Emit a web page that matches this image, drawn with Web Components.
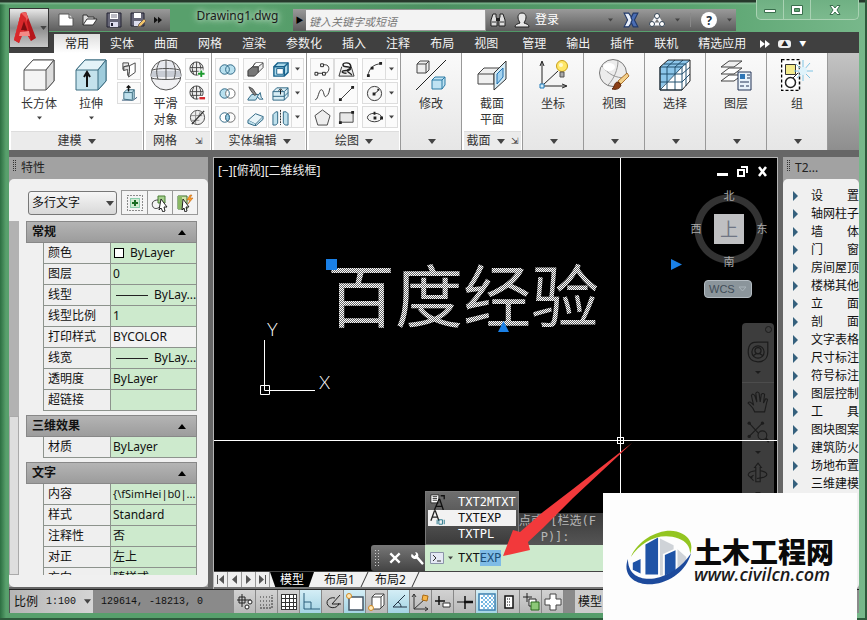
<!DOCTYPE html>
<html lang="zh-CN">
<head>
<meta charset="utf-8">
<title>Drawing1.dwg</title>
<style>
    html, body { margin: 0; height: 100%; }
    body { font: 12px/18px "Noto Sans", "Noto Sans CJK SC", sans-serif; color: #222; overflow: hidden; }
</style>
</head>
<body>
<cad-app></cad-app>

<script>
// 图标: [viewBox, 内容]
var ICONS = {
    app: ['0 0 24 32', '<path d="M8 1l5-1 10 26-5 3-3-5H8l-2 7-5-3z" fill="#b5161b"/><path d="M8 1l5-1 2 6-8 20-6 2z" fill="#f0605f"/><path d="M8 1l5 5 5 23-3-5-2-10-4 10-3 7-5-3z" fill="#d8282b"/><path d="M11 9l3 9H8z" fill="#7c0d10"/><path d="M7 20l9-1 1 5H6z" fill="#f58a86"/>'],
    down: ['0 0 8 5', '<path d="M0 0h8L4 5z" fill="#444"/>'],
    more: ['0 0 10 8', '<path d="M0 0l5 4-5 4zM5 0l5 4-5 4z" fill="currentColor"/>'],
    newf: ['0 0 16 14', '<path d="M1 1h10l4 4v8H1z" fill="#fff" stroke="#555"/><path d="M11 1v4h4" fill="#ddd" stroke="#555"/>'],
    open: ['0 0 16 14', '<path d="M1 12V2h4l1 2h6v3" fill="#ddd" stroke="#333"/><path d="M1 12l4-6h10l-4 6z" fill="#fff" stroke="#333"/>'],
    save: ['0 0 16 16', '<path d="M1 1h14v14H1z" fill="#667" stroke="#223"/><path d="M4 1h8v6H4z" fill="#fff"/><path d="M5 3h6M5 5h6" stroke="#778"/><path d="M4 10h8v5H4z" fill="#dde"/><path d="M5 11h2v3H5z" fill="#223"/>'],
    saveas: ['0 0 16 16', '<path d="M1 1h13v13H1z" fill="#667" stroke="#223"/><path d="M4 1h7v5H4z" fill="#fff"/><path d="M4 9h7v5H4z" fill="#dde"/><path d="M8 15l1-3 5-5 2 2-5 5z" fill="#f2c46a" stroke="#765"/>'],
    binoc: ['0 0 16 16', '<path d="M3 2h3v3l1 2v7H1V8zM13 2h-3v3L9 7v7h6V8z" fill="#ddd" stroke="#222"/><path d="M6 6h4v3H6z" fill="#222"/><path d="M2 10h4M10 10h4" stroke="#333"/>'],
    user: ['0 0 16 16', '<path d="M1 15c0-3 3-3 5-4l-1-2c-2-4-1-8 3-8s5 4 3 8l-1 2c2 1 5 1 5 4z" fill="#e8e8e8" stroke="#222"/>'],
    exchange: ['0 0 14 14', '<path d="M1 1h4l4 6-4 6H1l3-6z" fill="#e8eef8" stroke="#223a6b"/><path d="M13 1H9L7 5l1 2-1 2 2 4h4l-3-6z" fill="#4a6db5" stroke="#223a6b"/>'],
    a360: ['0 0 16 14', '<path d="M8 3L3 11h10z" fill="none" stroke="#f4f6fa" stroke-width="3"/><circle cx="8" cy="3" r="2.500" fill="#fff" stroke="#345"/><circle cx="3" cy="11" r="2.500" fill="#fff" stroke="#345"/><circle cx="13" cy="11" r="2.500" fill="#fff" stroke="#345"/>'],
    min: ['0 0 12 10', '<path d="M.5 4.500h11v3H.5z" fill="#fff" stroke="#3a6f4d"/>'],
    max: ['0 0 12 10', '<path d="M.5.5h11v9H.5z" fill="#fff" stroke="#3a6f4d"/><path d="M3.500 3.500h5v3h-5z" fill="#5fa673" stroke="#3a6f4d"/>'],
    close: ['0 0 12 10', '<path d="M1 .5h3l2 2.500L8 .5h3L8 5l3 4.500H8L6 7 4 9.500H1L4 5z" fill="#fff" stroke="#3a6f4d"/>'],
    box: ['0 0 32 32', '<path d="M1 11l9-10h21v21l-8 9H1z" fill="#f4f4f4" stroke="#555"/><path d="M1 11l9-10h21l-8 10z" fill="#fff" stroke="#555"/><path d="M23 11l8-10v21l-8 9z" fill="#ddd" stroke="#555"/>'],
    extrude: ['0 0 32 32', '<path d="M1 11l9-10h21v21l-8 9H1z" fill="#c4e2ec" stroke="#3b6c80"/><path d="M1 11l9-10h21l-8 10z" fill="#e4f3f8" stroke="#3b6c80"/><path d="M23 11l8-10v21l-8 9z" fill="#9fccdc" stroke="#3b6c80"/><path d="M12 28V14M9 18l3-5 3 5" fill="none" stroke="#111" stroke-width="2"/>'],
    polysolid: ['0 0 18 18', '<path d="M2 2h6v3L3 6v4l-1-1z" fill="#e8e8e8" stroke="#444"/><path d="M3 6l6-1v6l-1 5-1-1V9L3 10z" fill="#ddd" stroke="#444"/><path d="M9 5l6-3v10l-7 5 1-6z" fill="#fff" stroke="#444"/>'],
    presspull: ['0 0 18 18', '<path d="M1 16h12l4-3" fill="none" stroke="#357" /><path d="M3 15V8l3-3h8v9l-2 2z" fill="#bfe0ec" stroke="#3b6c80"/><path d="M12 8v7M3 8h9l2-3" fill="none" stroke="#3b6c80"/><path d="M8 7V1M6 3l2-2 2 2" fill="none" stroke="#111" stroke-width="1.500"/>'],
    sphere: ['0 0 32 32', '<circle cx="16" cy="16" r="15" fill="#f2f2f4" stroke="#555"/><path d="M2 12h28l1 6H1z" fill="#c8ccd4"/><path d="M9 3h14l2 9H7z" fill="#e6e8ee"/><path d="M2 11c8-2 20-2 28 0M1 19c8 2 22 2 30 0M10 2c-4 6-4 12-2 18M22 2c4 6 4 12 2 18M16 1v19" fill="none" stroke="#555"/>'],
    meshadd: ['0 0 18 18', '<circle cx="8" cy="8" r="7" fill="#eee" stroke="#444"/><path d="M1 7h14M2 11h12M5 2c-2 4-2 8 0 12M11 2c2 4 2 8 0 12M8 1v14" fill="none" stroke="#444"/><path d="M13 9v8M9 13h8" stroke="#fff" stroke-width="4"/><path d="M13 10v7M9.500 13.500h7" stroke="#1d9a2f" stroke-width="2"/>'],
    meshsub: ['0 0 18 18', '<circle cx="8" cy="8" r="7" fill="#eee" stroke="#444"/><path d="M1 7h14M2 11h12M5 2c-2 4-2 8 0 12M11 2c2 4 2 8 0 12M8 1v14" fill="none" stroke="#444"/><path d="M10 14h7" stroke="#fff" stroke-width="5"/><path d="M11 14h6" stroke="#d3262a" stroke-width="2.500"/>'],
    meshoff: ['0 0 18 18', '<circle cx="9" cy="9" r="7.500" fill="#eee" stroke="#444"/><path d="M2 7h12M3 12h8M7 2v14M12 3l-2 5" stroke="#888"/><path d="M3 16L16 2" stroke="#333" stroke-width="1.500"/>'],
    union: ['0 0 18 12', '<circle cx="6" cy="6" r="5" fill="#b8e0ef"/><circle cx="12" cy="6" r="5" fill="#b8e0ef"/><circle cx="6" cy="6" r="5" fill="none" stroke="#2b6482"/><circle cx="12" cy="6" r="5" fill="none" stroke="#2b6482"/>'],
    subtract: ['0 0 18 12', '<circle cx="6" cy="6" r="5" fill="#b8e0ef" stroke="#2b6482"/><circle cx="12" cy="6" r="5" fill="#fff" stroke="#666"/><path d="M9 2a5 5 0 010 8" fill="none" stroke="#2b6482"/>'],
    intersect: ['0 0 18 12', '<circle cx="6" cy="6" r="5" fill="#fff" stroke="#2b6482"/><circle cx="12" cy="6" r="5" fill="none" stroke="#666"/><path d="M9 2a5 5 0 010 8 5 5 0 010-8" fill="#9fd2e8" stroke="#2b6482"/>'],
    slice: ['0 0 18 18', '<path d="M1 10l5-4h6v6l-4 4H1z" fill="#777" stroke="#333"/><path d="M6 6l3-4h8v5l-5 5V6z" fill="#eee" stroke="#444"/><path d="M9 2l-3 4h6l5-4" fill="#fff" stroke="#444"/>'],
    thicken: ['0 0 18 18', '<path d="M1 15l4-5h8l-4 6H1z" fill="#bfe0ec" stroke="#2b6482"/><path d="M2 2l4 2 4 6-2 1-4-5z" fill="#888" stroke="#444"/><path d="M11 12l3-4 1 5 2 2h-4z" fill="#dfeff5" stroke="#2b6482"/>'],
    imprint: ['0 0 18 18', '<path d="M1 12l8-7 8 3-8 8z" fill="#e9f5f9" stroke="#2b6482"/><path d="M1 12v3l8 3v-2M17 8v3l-8 7" fill="#bfe0ec" stroke="#2b6482"/>'],
    shell: ['0 0 18 18', '<path d="M2 6l4-4h11v10l-4 4H2z" fill="#a9d8ea" stroke="#16608a" stroke-width="1.500"/><path d="M5 8h7v6H5z" fill="#fff" stroke="#16608a"/><path d="M2 6h11v10M13 6l4-4" fill="none" stroke="#16608a" stroke-width="1.500"/>'],
    extface: ['0 0 18 18', '<path d="M1 7l4-4h12v9l-4 4H1z" fill="#d9eef5" stroke="#2b6482"/><path d="M1 7h12v9M13 7l4-4M1 12h12l4-4" fill="none" stroke="#2b6482"/><path d="M9 10V5M7 6l2-2 2 2" fill="none" stroke="#111"/>'],
    separate: ['0 0 18 18', '<path d="M1 6l3-3h2v12l-2 2H1zM17 5l-2-2h-3v12l2 2h3z" fill="#bfe0ec" stroke="#2b6482"/><path d="M9 1v16" stroke="#222" stroke-dasharray="2 1"/>'],
    pline: ['0 0 18 18', '<path d="M2 13h8M8 4h4c5 0 5 8 0 9h-2" fill="none" stroke="#333"/><path d="M1 12h3v3H1zM9 12h3v3H9zM7 3h3v3H7z" fill="#fff" stroke="#222"/>'],
    helix: ['0 0 18 18', '<path d="M4 6L1 16h16L14 6" fill="#eee" stroke="#333"/><path d="M9 13c-6 0-6-3 0-3s5-4 0-4-5-4 0-4 6 5 2 7 5 5 3 6" fill="none" stroke="#222" stroke-width="1.500"/>'],
    arc: ['0 0 18 18', '<path d="M2 16C3 8 8 3 16 3" fill="none" stroke="#333"/><path d="M1 14h3v3H1zM5 6h3v3H5zM14 1h3v3h-3z" fill="#222"/>'],
    spline: ['0 0 18 18', '<path d="M1 15C4 18 5 4 8 5s2 9 5 7 3-6 4-9" fill="none" stroke="#333"/>'],
    line: ['0 0 18 18', '<path d="M3 15L15 3" stroke="#333"/><path d="M1 14h3v3H1zM14 1h3v3h-3z" fill="#222"/>'],
    circle: ['0 0 18 18', '<circle cx="9" cy="9" r="7.500" fill="#f4f4f4" stroke="#333"/><path d="M8 10l5-4" stroke="#333"/><path d="M7 8h3v3H7zM12 4h2v2h-2z" fill="#222"/>'],
    polygon: ['0 0 18 18', '<path d="M9 1l8 6-3 10H4L1 7z" fill="#eee" stroke="#444"/>'],
    rect: ['0 0 18 18', '<path d="M2 4h14v10H2z" fill="#e8e8e8" stroke="#444"/><path d="M1 13h3v3H1zM14 2h3v3h-3z" fill="#222"/>'],
    ellipse: ['0 0 18 18', '<ellipse cx="9" cy="9" rx="7.500" ry="4.500" fill="#f4f4f4" stroke="#333"/><path d="M8 8h3v3H8zM8 3h2v3H8zM15 8h3v3h-3z" fill="#222"/>'],
    modify: ['0 0 32 32', '<path d="M1 31L31 1" stroke="#222"/><path d="M2 5l3-3h9v9l-3 3H2z" fill="#eee" stroke="#444"/><path d="M2 5h9v9M11 5l3-3" fill="none" stroke="#444"/><path d="M17 21l3-3h10v8l-3 4H17z" fill="#bfe2f2" stroke="#2b7aa5"/><path d="M17 21h10v9M27 21l3-3" fill="none" stroke="#2b7aa5"/>'],
    section: ['0 0 32 32', '<path d="M2 15l6-6h16v10l-5 6H2z" fill="#f0f0f0" stroke="#444"/><path d="M2 15h16v10M18 15l5-6" fill="none" stroke="#444"/><path d="M18 14L30 2v18L18 31z" fill="#d5ebf5" stroke="#333"/><path d="M21 15l6-6v9l-6 7z" fill="#a5d3ef" stroke="#1f6fae"/>'],
    ucs: ['0 0 32 32', '<path d="M5 27V3M3 7l2-5 2 5M5 27h24M25 25l5 2-5 2" fill="none" stroke="#222"/><path d="M6 26L21 12" stroke="#222"/><path d="M3 25h4v4H3z" fill="#cdeaf8" stroke="#1f79b8"/><circle cx="25" cy="7" r="5.500" fill="#ffe768" stroke="#c89f18"/><path d="M23 13h4v5h-4z" fill="#aaa" stroke="#555"/><circle cx="24" cy="6" r="2" fill="#fffbd0"/>'],
    view: ['0 0 32 32', '<circle cx="15" cy="14" r="13.500" fill="#ececec" stroke="#777"/><path d="M4 7c6 8 13 12 24 12M20 2c0 8-4 18-10 24" fill="none" stroke="#999"/><ellipse cx="11" cy="8" rx="6" ry="4" fill="#fff"/><path d="M20 22l9-8 2 3-8 8z" fill="#f3d08a" stroke="#a9702d"/><path d="M14 30c3-2 2-7 6-7l3 3c-1 4-5 5-9 4z" fill="#8c3f15" stroke="#5b260b"/>'],
    select: ['0 0 32 32', '<path d="M1 8l8-7h22v21l-8 9H1z" fill="#fff"/><path d="M1 8l8-7h22l-8 7L1 30z" fill="#8cc6ea"/><path d="M1 8h22v23H1zM23 8l8-7M8 8v23M16 8v23M1 15h22M1 23h22M8 8l8-7M16 8l8-7M27 5v22M23 15l8-7M23 23l8-8M1 31L23 8M5 5h22" fill="none" stroke="#23506f"/><path d="M1 8l8-7h22v21l-8 9H1z" fill="none" stroke="#222"/>'],
    layers: ['0 0 32 32', '<path d="M9 16h13l-8 6H1z" fill="#fff" stroke="#444"/><path d="M9 9h13l-8 6H1z" fill="#fff" stroke="#444"/><path d="M9 2h13l-8 6H1z" fill="#eee" stroke="#444"/><path d="M18 13h13v18H18z" fill="#e8f2fa" stroke="#235"/><path d="M20 15h5v5h-5z" fill="#2e75b6"/><path d="M27 16h3M27 19h3M20 23h9M20 27h4M26 27h3" stroke="#235"/>'],
    group: ['0 0 32 32', '<path d="M.5.5h18v31H.5z" fill="#fff" stroke="#000" stroke-width="1.500" stroke-dasharray="3 2"/><path d="M4.500 5.500h10v10h-10z" fill="#f4ec8e" stroke="#333"/><circle cx="9.500" cy="23.500" r="5" fill="#fff" stroke="#222" stroke-width="1.500"/><path d="M12 19l5-5" stroke="#222"/><path d="M22 1v21M13 12h19M15 5l14 14M16 19L29 4" stroke="#7ec4e4"/><circle cx="22" cy="12" r="4" fill="#dff3fb"/>'],
    pickadd: ['0 0 18 18', '<path d="M1.500 1.500h15v15h-15z" fill="none" stroke="#222" stroke-dasharray="1 2"/><path d="M4.500 4.500h9v9h-9z" fill="#cfeacf" stroke="#3a7" stroke-dasharray="1 1"/><path d="M9 6v6M6 9h6" stroke="#176b22" stroke-width="2"/>'],
    pickobj: ['0 0 18 18', '<path d="M7 2h7v7H7z" fill="#a5d08d" stroke="#4a7f35"/><path d="M7 6c-5 0-7 3-5 7 1 2 5 2 6 0" fill="none" stroke="#444"/><path d="M10 5l6 8h-3l1 4-2 1-2-4-2 2z" fill="#fff" stroke="#222"/>'],
    qselect: ['0 0 18 18', '<path d="M2 2h9v13H2z" fill="#cfe4a8" stroke="#3b6c2a"/><path d="M2 2h4v13H2z" fill="#8ab864"/><path d="M14 1l-3 5h3l-2 4 5-6h-3l2-3z" fill="#ff9c2a" stroke="#b55c0c" stroke-width=".5"/><path d="M7 5l6 8h-3l1 4-2 1-1-4-2 2z" fill="#fff" stroke="#222"/>'],
    nav: ['0 0 18 18', '<path d="M1 9c0-8 4-8 8-8h8v8c0 5-3 8-8 8s-8-3-8-8z" fill="none" stroke="currentColor"/><circle cx="9" cy="9" r="5" fill="none" stroke="currentColor"/><circle cx="9" cy="8" r="2.500" fill="none" stroke="currentColor"/><path d="M5 12l3-2M13 12l-3-2" stroke="currentColor"/>'],
    hand: ['0 0 20 20', '<path d="M7 19c-1-4-4-6-6-8 1-2 3-1 5 2L4 4c1-2 2-1 3 0l2 6-1-8c1-2 2-1 3 0l1 8 1-7c1-1 2-1 3 0l-1 8 2-4c2 0 2 1 1 3l-2 9z" fill="none" stroke="currentColor"/>'],
    zoom: ['0 0 20 20', '<path d="M2 2l11 12M14 2L2 14" stroke="currentColor"/><circle cx="2" cy="2" r="1.500" fill="currentColor"/><circle cx="14" cy="2" r="1.500" fill="currentColor"/><circle cx="2" cy="14" r="1.500" fill="currentColor"/><circle cx="14" cy="13" r="4" fill="#3d3d3d" stroke="currentColor"/><path d="M17 16l3 3" stroke="currentColor" stroke-width="2"/>'],
    orbit: ['0 0 20 20', '<path d="M10 1l3 4h-1v13H8V5H7z" fill="none" stroke="currentColor"/><path d="M8 8C0 9-1 13 5 14M12 8c8 1 9 6-3 7M6 12l-3 2 3 3" fill="none" stroke="currentColor"/>'],
    cross: ['0 0 12 12', '<path d="M2 2l8 8M10 2l-8 8" stroke="#fff" stroke-width="2"/>'],
    wrench: ['0 0 16 16', '<path d="M7 6l7 8" stroke="#fff" stroke-width="3" stroke-linecap="round"/><path d="M2 3a4 4 0 007 4 4 4 0 00-3-6l1 3-2 2z" fill="#fff"/>'],
    prompt: ['0 0 14 12', '<path d="M.5.5h13v11H.5z" fill="#e4e8f4" stroke="#8a94a8"/><path d="M3 3l3 3-3 3M7 9h4" fill="none" stroke="#333"/>'],
    mtxt: ['0 0 18 18', '<path d="M1 1h9v9H1z" fill="#fff" stroke="#222"/><path d="M3 3h5M3 5h5M3 7h5" stroke="#222"/><path d="M5 18l5-12h1l4 12M7 14h6M12 2h4v4" fill="none" stroke="#111" stroke-width="1.500"/>'],
    texp: ['0 0 18 18', '<path d="M1 12L5 1h1l4 11M3 8h5" fill="none" stroke="#222" stroke-width="1.500"/><path d="M8 11v5M16 11v5M10 11h4v5h-4z" fill="none" stroke="#1b7186"/>'],
    // 状态栏
    infer: ['0 0 20 20', '<path d="M2 8h14M7 2v13" stroke="#222"/><path d="M4 5h6v6H4z" fill="none" stroke="#222"/><circle cx="15" cy="10" r="2" fill="#fff" stroke="#222"/><circle cx="12" cy="15" r="2" fill="#fff" stroke="#222"/>'],
    snap: ['0 0 20 20', '<path d="M3 5h12M3 9h12M3 13h12" stroke="#333" stroke-dasharray="1 2"/><path d="M3 16h12V3" fill="none" stroke="#333" stroke-dasharray="2 1"/>'],
    grid: ['0 0 20 20', '<path d="M2 2h16v16H2z" fill="#fff"/><path d="M2 2.500h16M2 6.500h16M2 10.500h16M2 14.500h16M2 17.500h16M2.500 2v16M6.500 2v16M10.500 2v16M14.500 2v16M17.500 2v16" stroke="#333"/>'],
    ortho: ['0 0 20 20', '<path d="M3 1v16h16M3 10h7v7" fill="none" stroke="#2b5f7b"/>'],
    polar: ['0 0 20 20', '<path d="M12 6a6 5 0 10 4 5M9 12h9M9 12l8-9" fill="none" stroke="#222"/>'],
    osnap: ['0 0 20 20', '<path d="M4 5h14v13H4z" fill="#fff" stroke="#456" stroke-width="1.500"/><circle cx="4" cy="4" r="2.500" fill="#ffe9b8" stroke="#d08a25"/>'],
    osnap3: ['0 0 20 20', '<path d="M5 5l3-3h9v11l-4 4H5z" fill="#fff" stroke="#444"/><path d="M5 5h9v11M14 5l3-3" fill="none" stroke="#444"/><circle cx="4" cy="16" r="2.500" fill="#ffe9b8" stroke="#d08a25"/>'],
    otrack: ['0 0 20 20', '<path d="M16 3L4 15h14M9 10c2 1 3 3 3 5" fill="none" stroke="#234"/>'],
    ducs: ['0 0 20 20', '<path d="M3 2v15h14M3 17L14 7M1 5l2-3 2 3M14 15l3 2-3 2" fill="none" stroke="#333"/><path d="M12 3l5 1-1 5-5-1z" fill="#f7b64a" stroke="#a96a14"/>'],
    dyn: ['0 0 20 20', '<path d="M2 9h10M6 4v9" stroke="#111" stroke-width="1.500"/><path d="M10 11h7v4h-7z" fill="#fff" stroke="#333"/>'],
    lwt: ['0 0 20 20', '<path d="M2 10h8" stroke="#111"/><path d="M9 10h9" stroke="#111" stroke-width="2.500"/><path d="M10 4v13" stroke="#111" stroke-width="1.500"/>'],
    tpy: ['0 0 20 20', '<path d="M2 2h16v16H2z" fill="#fff" stroke="#3a7fae" stroke-width="1.500"/><path d="M4 6h13M4 10h13M4 14h13" stroke="#6bb1de" stroke-width="2" stroke-dasharray="2 2"/><path d="M6 4h11M6 8h11M6 12h11M6 16h11" stroke="#8cc6ea" stroke-width="2" stroke-dasharray="2 2"/>'],
    qp: ['0 0 20 20', '<path d="M6 4h8v12H6z" fill="#fff" stroke="#111" stroke-width="1.500"/><path d="M8 7h4M8 10h4M8 13h4" stroke="#111" stroke-dasharray="1 1"/>'],
    sc: ['0 0 20 20', '<path d="M2 5h9M6 1v9" stroke="#222"/><path d="M8 7h7v7H8z" fill="#fff" stroke="#222"/><path d="M10 10h8v8h-8z" fill="#8cc878" stroke="#2b6b1e"/>'],
    am: ['0 0 20 20', '<path d="M7 2h6v5h5v6h-5v5H7v-5H2V7h5z" fill="#fff" stroke="#444"/>'],
    logo: ['0 0 70 56', '<path d="M7 40V33l8-4v15zM20 45V14l13-7v38zM40 46V25l11-5v21z" fill="#1f53a6"/><path d="M35 46V8l14 7v4l-11 5v22zM53 40V19l9 8v7z" fill="#cfd3d8"/><path d="M5 27C14 6 42-6 58 3c9 5 11 12 8 21 0-8-4-13-12-16C36 1 16 10 5 27z" fill="#93c521"/><path d="M2 29c-6 16 6 27 25 26 19-2 35-14 40-32-9 14-23 23-38 26C14 51 2 45 2 29z" fill="#1d4a9c"/>']
};

// 由模板生成自定义元素; setup 在首次连接时调用
function define(name, html, setup) {
    var tpl = document.createElement('template');
    tpl.innerHTML = html;

    customElements.define(name, class extends HTMLElement {
        constructor() {
            super();
            this.attachShadow({ mode: 'open' }).appendChild(tpl.content.cloneNode(true));
        }
        connectedCallback() {
            if (setup && !this.ready) {
                this.ready = true;
                setup(this, this.shadowRoot);
            }
        }
    });
}

define('cad-icon', `<style>
    :host { display: inline-block; flex: none; width: 18px; height: 18px; }
    svg { display: block; width: 100%; height: 100%; }
</style><svg aria-hidden="true"></svg>`, function (el, root) {
    var icon = ICONS[el.getAttribute('name')];
    var svg = root.querySelector('svg');
    svg.setAttribute('viewBox', icon[0]);
    svg.innerHTML = icon[1];
});

// 功能区小按钮
define('cad-tool', `<style>
    :host { display: flex; height: 22px; border: 1px solid #ddd; box-sizing: border-box; }
    button { display: flex; align-items: center; justify-content: center; width: 22px; padding: 0; border: 0; background: #fbfbfb; }
    .drop { width: 12px; border-left: 1px solid #ddd; display: none; }
    :host([drop]) .drop { display: flex; }
    .drop cad-icon { width: 5px; height: 4px; }
    .main cad-icon { width: 17px; height: 17px; }
</style>
<button class="main"></button><button class="drop" aria-label="更多"><cad-icon name="down"></cad-icon></button>`, function (el, root) {
    var btn = root.querySelector('.main');
    btn.setAttribute('aria-label', el.getAttribute('icon'));
    btn.innerHTML = '<cad-icon name="' + el.getAttribute('icon') + '"></cad-icon>';
});

// 功能区大按钮
define('cad-big', `<style>
    :host { display: block; width: 52px; flex: none; }
    button { display: flex; flex-direction: column; align-items: center; width: 100%; padding: 0; border: 0; background: none; font: inherit; line-height: 16px; color: #333; }
    .pic { width: 32px; height: 32px; margin: 1px 0 5px; }
    .drop { width: 5px; height: 4px; margin-top: 4px; display: none; }
    :host([drop]) .drop { display: block; }
</style>
<button><span></span><slot></slot><cad-icon class="drop" name="down"></cad-icon></button>`, function (el, root) {
    root.querySelector('span').outerHTML = '<cad-icon class="pic" name="' + el.getAttribute('icon') + '"></cad-icon>';
});

define('cad-panel', `<style>
    :host { display: flex; flex-direction: column; box-sizing: border-box; background: #fff; border-right: 1px solid #999; }
    .body { display: flex; flex: 1; gap: 4px; padding: 5px 2px 0; justify-content: flex-end; }
    :host([tight]) .body { gap: 0; }
    .title { display: flex; align-items: center; justify-content: center; gap: 6px; height: 19px; padding: 0; border: 0; margin: 0 1px 0 2px; background: #ebebeb; border-top: 1px solid #ddd; font: inherit; color: #333; }
    .title cad-icon { width: 8px; height: 5px; }
    .launch { display: none; font-size: 9px; }
    :host([launch]) .launch { display: inline; }
    :host([nodrop]) .title cad-icon { display: none; }
    :host([nodrop]) .launch { margin-left: 12px; }
    :host([collapsed]) { background: linear-gradient(#fafafa, #e6e6e6); }
    :host([collapsed]) .title { background: none; border-color: transparent; }
    :host([collapsed]) .body, :host([single]) .body { justify-content: center; }
</style>
<div class="body"><slot></slot></div>
<button class="title" aria-label="展开"><slot name="title"></slot><cad-icon name="down"></cad-icon><span class="launch">⇲</span></button>`);

define('cad-titlebar', `<style>
    :host { display: flex; align-items: flex-start; height: 32px; }
    .bar { display: flex; align-items: center; height: 22px; margin-top: 9px; background: linear-gradient(#9a9a9a, #5d5d5d); }
    .quick { width: 121px; box-sizing: border-box; padding-left: 9px; gap: 8px; }
    .bar cad-icon { width: 16px; height: 16px; }
    .bar .sm { width: 8px; height: 8px; }
    .bar .dd { width: 5px; height: 4px; }
    .bar button { display: flex; align-items: center; padding: 0; border: 0; background: none; font: inherit; color: #fff; }
    h1 { margin: 7px 0 0; width: 123px; box-sizing: border-box; padding: 0; text-align: center; font: 12px/18px "Noto Sans", sans-serif; text-shadow: 0 0 5px #cfe8d4, 0 0 8px #cfe8d4; color: #1a1a1a; white-space: nowrap; padding-left: 12px; }
    .info { flex: 1; min-width: 0; }
    .info .go { width: 13px; justify-content: center; color: #000; font-size: 8px; }
    input { width: 180px; height: 21px; box-sizing: border-box; padding: 3px 3px 0; border: 1px solid #999; border-width: 0 1px 1px 0; background: #f3f3f3; font: italic 11px/16px "Noto Sans", "Noto Sans CJK SC", sans-serif; }
    input::placeholder { color: #777; opacity: 1; }
    .acct { display: flex; gap: 8px; margin-left: 4px; align-items: center; }
    .acct button { gap: 5px; }
    .right { display: flex; flex: 1; align-items: center; justify-content: flex-end; gap: 10px; padding-right: 4px; }
    .right i { width: 1px; height: 14px; background: #888; }
    .help { width: 16px; height: 16px; justify-content: center; border-radius: 50%; }
    .bar .help { background: #fff; color: #234; font: bold 12px/15px "Noto Sans", sans-serif; padding: 0; justify-content: center; }
    .win { display: flex; margin: 0 0 0 20px; height: 19px; border: 1px solid #a9d2b3; border-top: 0; border-radius: 0 0 5px 5px; background: linear-gradient(#6fb083, #7cba8e); }
    .win button { display: flex; justify-content: center; width: 27px; padding: 5px 0 0; border: 0; border-right: 1px solid #a9d2b3; background: none; }
    .win button:last-child { width: 47px; border-right: 0; }
    .win cad-icon { width: 12px; height: 10px; }
</style>
<div class="bar quick">
    <button aria-label="新建"><cad-icon name="newf"></cad-icon></button><button aria-label="打开"><cad-icon name="open"></cad-icon></button>
    <button aria-label="保存"><cad-icon name="save"></cad-icon></button><button aria-label="另存为"><cad-icon name="saveas"></cad-icon></button>
    <button aria-label="更多" style="color:#111"><cad-icon class="sm" name="more"></cad-icon></button>
</div>
<h1>Drawing1.dwg</h1>
<div class="bar info">
    <button class="go" aria-label="展开搜索">▶</button>
    <input aria-label="搜索" placeholder="键入关键字或短语">
    <div class="acct"><button aria-label="搜索"><cad-icon name="binoc"></cad-icon></button><button><cad-icon name="user"></cad-icon>登录</button></div>
    <div class="right">
        <cad-icon class="dd" name="down"></cad-icon><button aria-label="Exchange"><cad-icon name="exchange"></cad-icon></button>
        <button aria-label="A360"><cad-icon name="a360"></cad-icon></button><cad-icon class="dd" name="down"></cad-icon><i></i>
        <button class="help">?</button><cad-icon class="dd" name="down"></cad-icon>
    </div>
</div>
<div class="win"><button aria-label="最小化"><cad-icon name="min"></cad-icon></button><button aria-label="最大化"><cad-icon name="max"></cad-icon></button><button aria-label="关闭"><cad-icon name="close"></cad-icon></button></div>`);

define('cad-tabs', `<style>
    :host { display: flex; height: 21px; background: #404040; color: #fff; padding-left: 5px; align-items: flex-end; white-space: nowrap; overflow: hidden; }
    div { display: flex; margin-right: 4px; }
    button { height: 19px; padding: 0 10px; border: 0; background: none; font: inherit; color: #f2f2f2; }
    .on { padding: 0 11px; background: linear-gradient(#ddd, #fff); color: #222; }
    .end { gap: 8px; align-items: center; height: 19px; }
    .end cad-icon { width: 10px; height: 8px; }
    .pill { width: 13px; height: 8px; border-radius: 3px; background: #eee; color: #222; font-size: 7px; line-height: 8px; text-align: center; }
    .tri { font-size: 7px; }
</style>
<div id="a"></div><div id="b"></div>
<div class="end"><cad-icon name="more"></cad-icon><span class="pill">▲</span><span class="tri">▼</span></div>`, function (el, root) {
    var fill = function (id, names) {
        root.getElementById(id).innerHTML = names.split(' ').map(function (n) {
            return '<button' + (n === '常用' ? ' class="on"' : '') + '>' + n + '</button>';
        }).join('');
    };
    fill('a', '常用 实体 曲面 网格 渲染 参数化 插入 注释 布局 视图');
    fill('b', '管理 输出 插件 联机 精选应用');
});

define('cad-ribbon', `<style>
    :host { display: flex; height: 97px; background: linear-gradient(#c4c4c4, #8e8e8e); }
    .cols { display: grid; grid-auto-flow: column; grid-template-rows: repeat(3, 22px); gap: 2px 0; }
    .w135 { width: 135px; } .w68 { width: 68px; } .w95 { width: 95px; } .w94 { width: 94px; }
    .slim { width: 61px; }
    .narrow { width: 39px; }
    .pair { column-gap: 1px; }
</style>
<cad-panel class="w135" tight><cad-big icon="box" drop>长方体</cad-big><cad-big icon="extrude" drop>拉伸</cad-big>
    <div class="cols"><cad-tool icon="polysolid"></cad-tool><cad-tool icon="presspull"></cad-tool></div><span slot="title">建模</span></cad-panel>
<cad-panel class="w68" tight nodrop launch><cad-big class="narrow" icon="sphere">平滑<br>对象</cad-big>
    <div class="cols"><cad-tool icon="meshadd"></cad-tool><cad-tool icon="meshsub"></cad-tool><cad-tool icon="meshoff"></cad-tool></div><span slot="title">网格</span></cad-panel>
<cad-panel class="w95">
    <div class="cols"><cad-tool icon="union"></cad-tool><cad-tool icon="subtract"></cad-tool><cad-tool icon="intersect"></cad-tool></div>
    <div class="cols pair"><cad-tool icon="slice"></cad-tool><cad-tool icon="thicken"></cad-tool><cad-tool icon="imprint"></cad-tool>
    <cad-tool icon="shell" drop></cad-tool><cad-tool icon="extface" drop></cad-tool><cad-tool icon="separate" drop></cad-tool></div><span slot="title">实体编辑</span></cad-panel>
<cad-panel class="w94">
    <div class="cols"><cad-tool icon="pline"></cad-tool><cad-tool icon="spline"></cad-tool><cad-tool icon="polygon"></cad-tool>
    <cad-tool icon="helix"></cad-tool><cad-tool icon="line"></cad-tool><cad-tool icon="rect"></cad-tool></div>
    <div class="cols"><cad-tool icon="arc" drop></cad-tool><cad-tool icon="circle" drop></cad-tool><cad-tool icon="ellipse" drop></cad-tool></div><span slot="title">绘图</span></cad-panel>
<cad-panel class="slim" collapsed><cad-big icon="modify">修改</cad-big></cad-panel>
<cad-panel class="slim" single launch><cad-big icon="section">截面<br>平面</cad-big><span slot="title">截面</span></cad-panel>
<cad-panel class="slim" collapsed><cad-big icon="ucs">坐标</cad-big></cad-panel>
<cad-panel class="slim" collapsed><cad-big icon="view">视图</cad-big></cad-panel>
<cad-panel class="slim" collapsed><cad-big icon="select">选择</cad-big></cad-panel>
<cad-panel class="slim" collapsed><cad-big icon="layers">图层</cad-big></cad-panel>
<cad-panel class="slim" collapsed><cad-big icon="group">组</cad-big></cad-panel>`);

// 带标题的停靠选项板
define('cad-palette', `<style>
    :host { display: flex; flex-direction: column; background: #a2a2a2; overflow: hidden; box-sizing: border-box; }
    header { display: flex; align-items: center; gap: 5px; height: 22px; padding-left: 3px; color: #222; }
    header i { width: 4px; height: 12px; background: conic-gradient(#333 25%, transparent 0) 0 0 / 2px 2px; align-self: flex-start; margin-top: 3px; }
    .body { flex: 1; min-height: 0; display: flex; flex-direction: column; background: #f0f0f0; border-radius: 5px; overflow: hidden; }
</style>
<header><i></i><slot name="title"></slot></header><div class="body"><slot></slot></div>`);

// 特性分组, rows: "名称=值;..."
define('prop-group', `<style>
    :host { display: block; margin-bottom: 4px; }
    button { display: flex; width: 100%; height: 22px; align-items: center; justify-content: space-between; padding: 0 10px 0 5px; border: 1px solid #888; background: linear-gradient(#b4b4b4, #9c9c9c); font: bold 12px/18px "Noto Sans", "Noto Sans CJK SC", sans-serif; color: #111; }
    button i { border: 4px solid transparent; border-top: 0; border-bottom: 5px solid #000; }
    table { width: calc(100% - 17px); margin-left: 17px; border-collapse: collapse; table-layout: fixed; border: 1px solid #8d938d; border-top: 0; }
    th, td { height: 20px; padding: 0 4px; border-bottom: 1px solid #8d938d; font-weight: normal; text-align: left; line-height: 20px; white-space: nowrap; color: #111; }
    th { width: 58px; background: #efefef; }
    td { padding: 0 0 0 2px; background: #cdeacd; border-left: 1px solid #8d938d; }
    td.plain { background: #f2f2f2; }
    td.long { font-size: 11px; }
    .sw { display: inline-block; width: 8px; height: 8px; margin: 0 6px 0 1px; border: 1px solid #000; background: #fff; vertical-align: -1px; }
    .ln { display: inline-block; width: 32px; height: 1px; margin: 0 6px 9px 3px; background: #222; vertical-align: bottom; }
</style><button><span></span><i></i></button><table></table>`, function (el, root) {
    root.querySelector('span').textContent = el.getAttribute('name');
    var table = root.querySelector('table');
    el.getAttribute('rows').split(';').forEach(function (pair) {
        var parts = pair.split('=');
        var row = table.insertRow();
        var th = document.createElement('th');
        th.textContent = parts[0];
        row.appendChild(th);
        var td = row.insertCell();
        td.textContent = parts[1].replace(/^[#-]/, '');
        if (parts[1] === 'BYCOLOR') td.className = 'plain';
        if (parts[1].length > 12) td.className = 'long';
        if (/^[#-]/.test(parts[1])) {
            var mark = document.createElement('span');
            mark.className = parts[1][0] === '#' ? 'sw' : 'ln';
            td.prepend(mark);
        }
    });
});

define('cad-properties', `<style>
    :host { display: flex; flex-direction: column; flex: 1; min-height: 0; padding: 11px 0 12px; }
    .top { display: flex; align-items: center; padding: 0 10px 0 19px; margin-bottom: 6px; gap: 4px; height: 25px; }
    select { flex: 1; min-width: 0; height: 24px; padding: 0 3px; border: 1px solid #777; border-radius: 3px; font: inherit; color: #111; appearance: none; background: linear-gradient(#f6f6f6, #d8d8d8); }
    .sel { position: relative; display: flex; width: 92px; }
    .sel cad-icon { position: absolute; right: 3px; top: 10px; width: 8px; height: 5px; pointer-events: none; }
    .tools { display: flex; border: 1px solid #999; }
    .tools button { display: flex; align-items: center; justify-content: center; width: 25px; height: 23px; padding: 0; border: 0; background: #f4f4f4; }
    .tools button + button { border-left: 1px solid #999; }
    .list { display: flex; flex: 1; min-height: 0; }
    .scroll { width: 10px; margin-right: 7px; background: #b2b2b2; display: flex; align-items: flex-end; }
    .scroll::after { content: ""; width: 100%; height: 45%; background: #dedede; border: 1px solid #aaa; box-sizing: border-box; }
    .groups { flex: 1; min-width: 0; margin-right: 11px; overflow: hidden; }
</style>
<div class="top">
    <div class="sel"><select aria-label="对象类型"><option>多行文字</option></select><cad-icon name="down"></cad-icon></div>
    <div class="tools"><button aria-label="切换选择"><cad-icon name="pickadd"></cad-icon></button><button aria-label="选择对象"><cad-icon name="pickobj"></cad-icon></button><button aria-label="快速选择"><cad-icon name="qselect"></cad-icon></button></div>
</div>
<div class="list"><div class="scroll"></div><div class="groups">
    <prop-group name="常规" rows="颜色=#ByLayer;图层=0;线型=-ByLay...;线型比例=1;打印样式=BYCOLOR;线宽=-ByLay...;透明度=ByLayer;超链接="></prop-group>
    <prop-group name="三维效果" rows="材质=ByLayer"></prop-group>
    <prop-group name="文字" rows="内容={\\fSimHei|b0|...;样式=Standard;注释性=否;对正=左上;方向=随样式"></prop-group>
</div></div>`);

define('view-cube', `<style>
    :host { display: grid; grid-template: 20px 1fr 20px / 20px 1fr 20px; width: 86px; height: 86px; place-items: center; font-size: 11px; line-height: 14px; color: #aaa; box-sizing: border-box;
        background: radial-gradient(circle, transparent 27px, #333 28px, #333 34px, transparent 35px); }
    .n, .s { grid-column: 2; } .n { grid-row: 1; } .s { grid-row: 3; }
    .w { grid-column: 1; grid-row: 2; } .e { grid-column: 3; grid-row: 2; }
    b { grid-area: 2 / 2; width: 30px; height: 30px; background: #bfc0c2; color: #707684; font: 18px/28px "Noto Sans CJK SC", sans-serif; text-align: center; }
</style>
<span class="n">北</span><span class="w">西</span><b>上</b><span class="e">东</span><span class="s">南</span>`);

define('command-line', `<style>
    :host { display: block; font: 12px/16px "DejaVu Sans Mono", "Noto Sans CJK SC", monospace; }
    .top { display: flex; align-items: flex-end; padding-left: 54px; height: 53px; }
    ul { flex: none; width: 94px; box-sizing: border-box; margin: 0; padding: 2px; list-style: none; border: 1px solid #777; background: linear-gradient(#6e6e6e, #3b3b3b); color: #fff; }
    li { display: flex; height: 16px; }
    li.on { background: #f2f2f2; color: #111; }
    li cad-icon { width: 16px; height: 16px; margin: 0 12px 0 2px; }
    li.none { padding-left: 30px; }
    .hist { flex: 1; min-width: 0; height: 32px; overflow: hidden; background: linear-gradient(#3a3a3a, #555); color: #b5b5b5; line-height: 16px; white-space: pre; }
    .hist p { margin: 0; }
    .bar { display: flex; height: 26px; }
    .grip { display: flex; align-items: center; gap: 8px; width: 54px; box-sizing: border-box; padding-left: 3px; background: linear-gradient(#777, #444); border-radius: 3px 0 0 3px; }
    .grip i { width: 6px; height: 18px; background: radial-gradient(#ccc 40%, transparent 45%) 0 0 / 3px 3px; }
    .grip button { display: flex; padding: 0; border: 0; background: none; }
    .grip cad-icon { width: 14px; height: 14px; }
    label { display: flex; flex: 1; align-items: center; gap: 4px; min-width: 0; padding-left: 5px; background: #cdeacd; }
    label cad-icon { width: 14px; height: 12px; }
    label .dd { width: 5px; height: 4px; margin-right: 1px; }
    input { width: 120px; padding: 0; border: 0; outline: 0; background: none; font: inherit; color: #111; }
    input::selection { background: #7fbce6; color: #1c4f78; }
</style>
<div class="top">
    <ul><li><cad-icon name="mtxt"></cad-icon>TXT2MTXT</li><li class="on"><cad-icon name="texp"></cad-icon>TXTEXP</li><li class="none">TXTPL</li></ul>
    <div class="hist"><p>点或 [栏选(F</p><p>   P)]:</p></div>
</div>
<div class="bar">
    <div class="grip"><i></i><button aria-label="关闭"><cad-icon name="cross"></cad-icon></button><button aria-label="自定义"><cad-icon name="wrench"></cad-icon></button></div>
    <label><cad-icon name="prompt"></cad-icon><cad-icon class="dd" name="down"></cad-icon><input aria-label="命令" value="TXTEXP"></label>
</div>`, function (el, root) {
    // 自动补全的部分保持选中
    var input = root.querySelector('input');
    input.focus({ preventScroll: true });
    input.setSelectionRange(3, 6);
});

define('cad-canvas', `<style>
    :host { position: relative; display: block; flex: 1; min-height: 0; background: #000; overflow: hidden; color: #eee; }
    :host > * { position: absolute; }
    .view { left: 4px; top: 4px; white-space: nowrap; }
    .mtext { left: 113px; top: 95px; font: 68px/80px "Noto Sans CJK SC", sans-serif; color: #fff; white-space: nowrap; }
    .mtext::after { content: ""; position: absolute; inset: 0; background: repeating-conic-gradient(#000 0 25%, transparent 0 50%) 0 0 / 2px 2px; opacity: .6; }
    .grip { width: 11px; height: 11px; background: #1a80e6; }
    .g1 { left: 112px; top: 101px; }
    .g2 { left: 284px; top: 163px; clip-path: polygon(50% 0, 100% 100%, 0 100%); }
    .g3 { left: 457px; top: 101px; clip-path: polygon(0 0, 100% 50%, 0 100%); }
    .ucs { left: 45px; top: 160px; width: 78px; height: 78px; }
    .h { left: 0; right: 0; top: 282px; height: 1px; background: #fff; }
    .v { top: 0; bottom: 0; left: 406px; width: 1px; background: #fff; }
    .pick { left: 403px; top: 279px; width: 5px; height: 5px; border: 1px solid #fff; }
    .win { right: 9px; top: 8px; display: flex; gap: 9px; }
    .win svg { display: block; width: 11px; height: 11px; }
    .win button { padding: 0; border: 0; background: none; }
    view-cube { right: 5px; top: 28px; }
    .wcs { right: 25px; top: 122px; display: flex; align-items: center; justify-content: space-between; width: 48px; height: 18px; padding: 0 4px; border: 1px solid #b4bcc2; border-radius: 4px; background: #8b959b; color: #414d58; font: 11px/16px "Liberation Sans", sans-serif; }
    nav { right: 3px; top: 165px; bottom: 20px; width: 32px; box-sizing: border-box; padding: 18px 0 0; display: flex; flex-direction: column; align-items: center; gap: 8px; background: #3d3d3d; border-radius: 4px 4px 0 0; color: #1c1c1c; }
    nav cad-icon { width: 22px; height: 22px; }
    nav i { border: 3px solid transparent; border-top-color: #1c1c1c; border-bottom: 0; }
    nav hr { width: 100%; margin: 0; border: 0; border-top: 1px solid #4c4c4c; }
    nav .steer { margin: -15px 0 0 20px; width: 5px; height: 5px; border: 1px solid #1c1c1c; border-radius: 50%; }
    command-line { left: 157px; right: 0; bottom: 0; }
    .arrow { left: 286px; top: 283px; width: 134px; height: 118px; }
</style>
<span class="view">[−][俯视][二维线框]</span>
<div class="mtext">百度经验</div>
<i class="grip g1"></i><i class="grip g2"></i><i class="grip g3"></i>
<svg class="ucs" viewBox="0 0 78 78" stroke="#fff" fill="none"><path d="M5.500 67.500V22M10 72.500h46M1.500 67.500h9v9h-9zM5.500 67.500v5h5"/>
    <text x="8" y="18" font-family="Lato" font-weight="300" font-size="18" fill="#fff" stroke="none">Y</text><text x="60" y="71" font-family="Lato" font-weight="300" font-size="18" fill="#fff" stroke="none">X</text></svg>
<div class="win">
    <button aria-label="最小化"><svg viewBox="0 0 11 11"><path d="M0 7h11v3H0z" fill="#fff"/></svg></button>
    <button aria-label="还原"><svg viewBox="0 0 11 11"><path d="M4 1h6v6M1 4h6v6H1z" fill="none" stroke="#fff" stroke-width="2"/></svg></button>
    <button aria-label="关闭"><svg viewBox="0 0 11 11"><path d="M2 1l7 9M9 1l-7 9" stroke="#fff" stroke-width="2.500"/></svg></button>
</div>
<view-cube></view-cube>
<button class="wcs">WCS <svg width="9" height="6" viewBox="0 0 9 6"><path d="M1 1h7L4.500 5z" fill="none" stroke="#aab4ba"/></svg></button>
<nav><span class="steer"></span><cad-icon name="nav"></cad-icon><i></i><hr><cad-icon name="hand"></cad-icon><cad-icon name="zoom"></cad-icon><i></i><cad-icon name="orbit"></cad-icon><i></i><hr></nav>
<div class="h"></div><div class="v"></div><div class="pick"></div>
<command-line></command-line>
<svg class="arrow" viewBox="0 0 134 118"><path d="M132 2L73 48 43 71 20 91 13 89 3 115 30 109 28 101 43 87 73 57z" fill="#f2393b"/></svg>`);

define('layout-tabs', `<style>
    :host { display: flex; height: 15px; background: #f1f1f1; border-top: 1px solid #444; border-bottom: 2px solid #777; color: #111; line-height: 15px; }
    .nav { display: flex; width: 56px; }
    .nav button { width: 14px; padding: 0; border: 0; border-right: 1px solid #999; background: #eee; display: flex; align-items: center; justify-content: center; }
    .nav svg { width: 9px; height: 9px; }
    .tab { padding: 0 10px; border: 0; background: none; font: inherit; line-height: 14px; color: #111; position: relative; }
    .on { background: #000; color: #fff; clip-path: polygon(0 0, 100% 0, 88% 100%, 12% 100%); }
    .tab:not(.on)::after { content: ""; position: absolute; right: 0; top: 0; width: 1px; height: 15px; background: #333; transform: skewX(-25deg); }
</style>
<div class="nav"><button aria-label="第一个"><svg viewBox="0 0 9 9"><path d="M1 0h1v9H1zM8 0v9L3 4.500z" fill="#555"/></svg></button><button aria-label="上一个"><svg viewBox="0 0 9 9"><path d="M7 0v9L2 4.500z" fill="#555"/></svg></button><button aria-label="下一个"><svg viewBox="0 0 9 9"><path d="M2 0v9l5-4.500z" fill="#555"/></svg></button><button aria-label="最后一个"><svg viewBox="0 0 9 9"><path d="M7 0h1v9H7zM1 0v9l5-4.500z" fill="#555"/></svg></button></div>
<button class="tab on">模型</button><button class="tab">布局1</button><button class="tab">布局2</button>`);

define('screen-menu', `<style>
    :host { display: block; padding: 8px 0 0 10px; overflow: hidden; }
    ul { margin: 0; padding: 0; list-style: none; }
    li { display: flex; align-items: center; gap: 13px; height: 18px; white-space: pre; color: #111; }
    li::before { content: ""; border: 5px solid transparent; border-left-color: #35607d; border-right: 0; }
</style><ul></ul>`, function (el, root) {
    root.querySelector('ul').innerHTML = ['设　　置', '轴网柱子', '墙　　体', '门　　窗', '房间屋顶', '楼梯其他', '立　　面', '剖　　面', '文字表格', '尺寸标注', '符号标注', '图层控制', '工　　具', '图块图案', '建筑防火', '场地布置', '三维建模'].map(function (t) {
        return '<li>' + t + '</li>';
    }).join('');
});

define('status-bar', `<style>
    :host { display: flex; height: 23px; background: #8a8a8a; border-top: 1px solid #222; color: #111; }
    button { padding: 0; border: 0; font: inherit; color: inherit; }
    .scale { display: flex; align-items: center; gap: 8px; width: 84px; padding-left: 4px; background: linear-gradient(90deg, #b5b5b5, #d5d5d5); white-space: nowrap; border-left: 1px solid #555; }
    .scale cad-icon { width: 7px; height: 5px; }
    .mono { font: 10px/24px "Liberation Mono", monospace; }
    .pos { width: 141px; box-sizing: border-box; padding-left: 8px; }
    .btn { display: flex; align-items: center; justify-content: center; width: 22px; background: linear-gradient(#d2d2d2, #b8b8b8); border-right: 1px solid #888; }
    .btn.on { background: linear-gradient(#d4eef6, #a4d4e4); }
    .btn cad-icon { width: 20px; height: 20px; }
    .space { margin-left: 11px; padding: 0 3px; background: #ccc; }
</style>
<button class="scale"><span>比例</span><span class="mono">1:100</span><cad-icon name="down"></cad-icon></button>
<span class="pos mono">129614, -18213, 0</span>`, function (el, root) {
    'infer snap grid *ortho polar *osnap osnap3 *otrack ducs dyn lwt *tpy qp sc am'.split(' ').forEach(function (n) {
        var btn = document.createElement('button');
        btn.className = n[0] === '*' ? 'btn on' : 'btn';
        n = n.replace('*', '');
        btn.setAttribute('aria-label', n);
        btn.innerHTML = '<cad-icon name="' + n + '"></cad-icon>';
        root.appendChild(btn);
    });
    var space = document.createElement('button');
    space.className = 'space';
    space.textContent = '模型';
    root.appendChild(space);
});

define('site-mark', `<style>
    :host { display: flex; align-items: center; justify-content: center; background: #fdfdfd; box-sizing: border-box; padding-top: 3px; }
    cad-icon { width: 68px; height: 56px; }
    strong { display: block; font: 900 28px/28px "Noto Sans CJK SC", sans-serif; color: #0a0a0a; }
    span { display: block; font: italic 600 18px/18px "Open Sans", "Noto Sans", sans-serif; color: #1a1a1a; }
    div { padding-top: 4px; }
</style>
<cad-icon name="logo"></cad-icon><div><strong>土木工程网</strong><span>www.civilcn.com</span></div>`);

define('cad-app', `<style>
    :host { position: relative; display: flex; flex-direction: column; height: 100vh; min-height: 480px; box-sizing: border-box; padding: 0 8px 7px 9px; overflow: hidden;
        background: linear-gradient(#26382b 0 2px, #7fb891 3px, transparent 5px), linear-gradient(90deg, #2c6e41, #58a06c 6px, #58a06c 30%, #4d9162 50%, #5aa470 80%, #78b88b); box-shadow: inset -2px -2px #2e5a3c; }
    .head { display: grid; grid-template-columns: 40px 1fr; flex: none; background: linear-gradient(#404040, #404040) 0 100% / 100% 21px no-repeat; }
    .logo { grid-row: 1 / 3; display: flex; align-items: center; gap: 3px; height: 40px; margin-top: 8px; padding: 0 3px; border: 1px solid #333; background: linear-gradient(#e8e8e8, #8c8c8c 50%, #c8c8c8); z-index: 1; }
    .logo cad-icon { width: 24px; height: 32px; }
    .logo .dd { width: 7px; height: 4px; }
    cad-tabs, cad-titlebar { grid-column: 2; min-width: 0; }
    cad-ribbon { flex: none; }
    main { display: flex; flex: 1; min-height: 0; gap: 5px; padding-top: 7px; background: #666; }
    .left { flex: none; width: 199px; margin-bottom: 2px; }
    .center { display: flex; flex-direction: column; flex: 1; min-width: 0; border: 1px solid #b5b5b5; border-width: 1px 1px 0; }
    .right { flex: none; width: 76px; }
    site-mark { position: absolute; right: 10px; bottom: 0; width: 254px; height: 127px; z-index: 2; }
</style>
<div class="head"><button class="logo" aria-label="应用程序菜单"><cad-icon name="app"></cad-icon><cad-icon class="dd" name="down"></cad-icon></button><cad-titlebar></cad-titlebar><cad-tabs></cad-tabs></div>
<cad-ribbon></cad-ribbon>
<main>
    <cad-palette class="left"><span slot="title">特性</span><cad-properties></cad-properties></cad-palette>
    <div class="center"><cad-canvas></cad-canvas><layout-tabs></layout-tabs></div>
    <cad-palette class="right"><span slot="title">T2...</span><screen-menu></screen-menu></cad-palette>
</main>
<status-bar></status-bar>
<site-mark></site-mark>`);
</script>
</body>
</html>
